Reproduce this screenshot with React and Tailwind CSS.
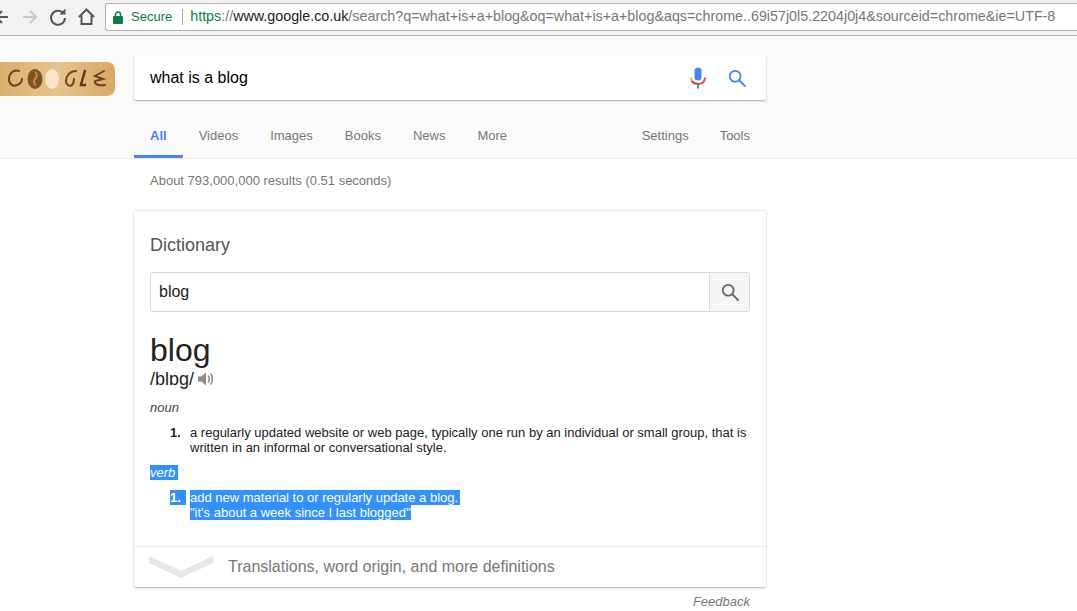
import React from "react";

const font = { fontFamily: '"Liberation Sans", Arial, sans-serif' };

const Doodle = () => (
  <svg width="116" height="34" viewBox="0 0 116 34" className="block">
    <defs>
      <linearGradient id="wood" x1="0" y1="0" x2="1" y2="0">
        <stop offset="0" stopColor="#dcae6c" />
        <stop offset="0.5" stopColor="#e6c48e" />
        <stop offset="1" stopColor="#d8a862" />
      </linearGradient>
    </defs>
    <path d="M0 0H107a8 8 0 0 1 8 8V26a8 8 0 0 1-8 8H0Z" fill="url(#wood)" />
    <g fill="none" stroke="#6d4420" strokeWidth="2" strokeLinecap="round">
      <path d="M19 9C13 7 9 12 9 17C9 22 13 25 17 23C20 22 22 20 22 17" />
      <path d="M76 9C70 9 66 14 66 19C66 23 70 25 72 23C74 21 74 19 74 17" />
      <path d="M104 9L95 14L103 17L95 19C94 22 98 24 105 23" />
    </g>
    <ellipse cx="35" cy="17" rx="7.5" ry="10" fill="#7f5226" />
    <path d="M35 10c3 2 2 5 0 7s-1 5 1 6" stroke="#c48a4c" strokeWidth="2" fill="none" />
    <ellipse cx="52" cy="17" rx="7" ry="10" fill="#f4e6cf" />
    <path d="M85 8C84 13 82 18 81 23H86" stroke="#5f3a18" strokeWidth="2.5" fill="none" />
  </svg>
);

const Mic = () => (
  <svg width="16" height="22" viewBox="0 0 16 22">
    <rect x="4.5" y="0.5" width="7" height="13" rx="3.5" fill="#4285f4" />
    <path d="M1 10.5c0 4 3 6.5 7 6.5" stroke="#fbbc05" strokeWidth="2" fill="none" />
    <path d="M15 10.5c0 4-3 6.5-7 6.5s-5-1.2-6-3" stroke="#ea4335" strokeWidth="2" fill="none" />
    <rect x="7" y="17.5" width="2" height="4" fill="#34a853" />
  </svg>
);

const Lens = ({ color, size }) => (
  <svg width={size} height={size} viewBox="0 0 20 20" fill="none" stroke={color} strokeWidth="2">
    <circle cx="8" cy="8" r="6" />
    <path d="M12.5 12.5L19 19" strokeLinecap="round" />
  </svg>
);

const Tab = ({ children, active }) => (
  <div
    className={`h-full flex items-center pt-[2px] border-b-[3px] text-[13px] ${
      active ? "border-[#4285f4] text-[#4285f4] font-bold px-4" : "border-transparent text-[#777777]"
    }`}
  >
    {children}
  </div>
);

export default function App() {
  return (
    <div className="w-[1077px] h-[611px] overflow-hidden bg-white flex flex-col" style={font}>
      {/* browser toolbar */}
      <div className="h-[36px] shrink-0 bg-[#f2f2f2] border-b border-[#b4b4b4] flex items-start">
        <div className="w-[105px] shrink-0 h-full overflow-hidden">
          <svg width="105" height="34" viewBox="0 0 105 34" fill="none" strokeWidth="2">
            <path d="M8 17H-4M2 11l-6 6 6 6" stroke="#555555" />
            <path d="M23 17h13M30 11l6 6-6 6" stroke="#c8c8c8" />
            <path d="M63.5 13.5A7 7 0 1 0 65 18" stroke="#555555" />
            <path d="M59.5 14.5h6v-6" fill="#555555" stroke="none" />
            <path d="M79 17l7.5-7.5L94 17M81.5 15.5V24h10v-8.5" stroke="#555555" />
          </svg>
        </div>
        <div className="flex-1 h-[28px] mt-[3px] bg-white border border-r-0 border-[#b4b4b4] rounded-l-[3px] flex items-center text-[14.3px] whitespace-nowrap overflow-hidden">
          <svg width="10" height="13" viewBox="0 0 10 13" className="ml-[7px] shrink-0">
            <rect x="0" y="5" width="10" height="8" rx="1" fill="#0b8043" />
            <path d="M2.5 6V3.5a2.5 2.5 0 0 1 5 0V6" fill="none" stroke="#0b8043" strokeWidth="1.5" />
          </svg>
          <span className="ml-[8px] text-[13px] text-[#0b8043]">Secure</span>
          <span className="ml-[10px] mr-[7px] w-px h-[16px] bg-[#a8a8a8]" />
          <span className="text-[#0b8043]">https</span>
          <span className="text-[#777777]">://</span>
          <span className="text-[#222222]">www.google.co.uk</span>
          <span className="text-[#777777]">/search?q=what+is+a+blog&amp;oq=what+is+a+blog&amp;aqs=chrome..69i57j0l5.2204j0j4&amp;sourceid=chrome&amp;ie=UTF-8</span>
        </div>
      </div>

      {/* search header */}
      <div className="h-[123px] shrink-0 bg-[#fafafa] border-b border-[#ebebeb] flex flex-col">
        <div className="flex items-start">
          <div className="w-[134px] shrink-0 pt-[26px]">
            <Doodle />
          </div>
          <div className="mt-[20px] w-[632px] h-[44px] bg-white rounded-[2px] shadow-[0_1px_2px_rgba(0,0,0,0.3)] flex items-center pl-4 pr-[20px] text-[16px] text-black">
            <span className="flex-1">what is a blog</span>
            <Mic />
            <div className="ml-[22px]">
              <Lens color="#4285f4" size={18} />
            </div>
          </div>
        </div>
        <div className="ml-[134px] w-[632px] flex-1 mt-[15px] flex items-stretch">
          <Tab active>All</Tab>
          <div className="flex gap-8 ml-4">
            <Tab>Videos</Tab>
            <Tab>Images</Tab>
            <Tab>Books</Tab>
            <Tab>News</Tab>
            <Tab>More</Tab>
          </div>
          <div className="flex gap-[31px] ml-auto mr-4">
            <Tab>Settings</Tab>
            <Tab>Tools</Tab>
          </div>
        </div>
      </div>

      <div className="pl-[150px] pt-[14px] text-[13px] leading-4 text-[#777777]">
        About 793,000,000 results (0.51 seconds)
      </div>

      {/* dictionary card */}
      <div className="ml-[134px] mt-[21px] w-[632px] h-[377px] shrink-0 bg-white rounded-[2px] border-t border-[#e8e8e8] shadow-[0_1px_2px_rgba(0,0,0,0.3)] flex flex-col">
        <div className="px-4 flex-1">
          <div className="pt-[22px] text-[18px] leading-[24px] text-[#555555]">Dictionary</div>
          <div className="mt-[15px] h-[40px] flex border border-[#d9d9d9] rounded-[2px]">
            <div className="flex-1 pl-2 flex items-center text-[16px] text-[#222222]">blog</div>
            <div className="w-[40px] bg-[#f5f5f5] border-l border-[#d9d9d9] flex items-center justify-center">
              <Lens color="#666666" size={18} />
            </div>
          </div>
          <div className="mt-[20px] text-[32px] leading-[37px] text-[#222222]">blog</div>
          <div className="flex items-center h-[20px] text-[18px] text-[#222222]">
            <span>/blɒg/</span>
            <svg width="16" height="16" viewBox="0 0 16 16" fill="#8a8a8a" className="ml-[4px]">
              <path d="M0 5.5h3.5L8 1.5v13l-4.5-4H0Z" />
              <path d="M10 4.5c1.6 2 1.6 5 0 7M12.5 2.5c2.6 3.2 2.6 7.8 0 11" fill="none" stroke="#8a8a8a" strokeWidth="1.5" />
            </svg>
          </div>
          <div className="mt-[10px] text-[13px] leading-[18px] italic text-[#444444]">noun</div>
          <div className="mt-[8px] flex text-[13px] leading-[15px] text-[#222222]">
            <div className="w-[40px] pl-[20px] shrink-0 font-bold">1.</div>
            <div>
              a regularly updated website or web page, typically one run by an individual or small group, that is
              written in an informal or conversational style.
            </div>
          </div>
          <div className="mt-[10px] text-[13px] leading-[15px] italic text-white">
            <span className="bg-[#3390ff] pr-[3px]">verb</span>
          </div>
          <div className="mt-[10px] flex text-[13px] leading-[15px] text-white">
            <div className="w-[40px] pl-[20px] shrink-0 font-bold">
              <span className="bg-[#3390ff] pr-[5px]">1.</span>
            </div>
            <div>
              <div>
                <span className="bg-[#3390ff] pr-[2px]">add new material to or regularly update a blog.</span>
              </div>
              <div>
                <span className="bg-[#3390ff]">"it's about a week since I last blogged"</span>
              </div>
            </div>
          </div>
        </div>
        <div className="h-[41px] shrink-0 border-t border-[#ebebeb] flex items-center pl-[15px]">
          <svg width="64" height="22" viewBox="0 0 64 22" fill="#e6e6e6">
            <path d="M0 0L32 15 64 0V7L32 22 0 7Z" />
          </svg>
          <span className="ml-[15px] text-[16px] text-[#777777]">Translations, word origin, and more definitions</span>
        </div>
      </div>

      <div className="ml-[134px] w-[616px] mt-[7px] text-right text-[13px] leading-4 italic text-[#777777]">Feedback</div>
    </div>
  );
}
